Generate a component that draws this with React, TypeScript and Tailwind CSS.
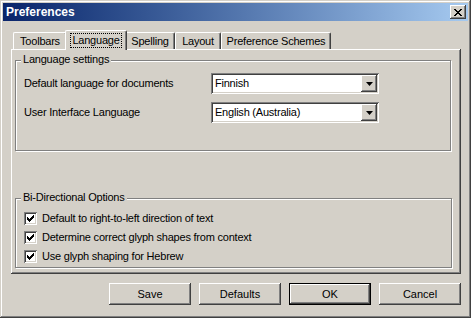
import type { ReactNode } from "react";

const raised =
  "bg-[#d4d0c8] shadow-[inset_-1px_-1px_#404040,inset_1px_1px_#ffffff,inset_-2px_-2px_#808080,inset_2px_2px_#d4d0c8]";
const sunken =
  "shadow-[inset_1px_1px_#808080,inset_-1px_-1px_#ffffff,inset_2px_2px_#404040,inset_-2px_-2px_#d4d0c8]";

function GroupBox({
  label,
  className,
  children,
}: {
  label: string;
  className: string;
  children: ReactNode;
}) {
  return (
    <div
      className={`relative border border-[#808080] shadow-[inset_1px_1px_#ffffff,1px_1px_#ffffff] ${className}`}
    >
      <span className="absolute -top-[8px] left-[5px] bg-[#d4d0c8] px-[2px] leading-[13px]">
        {label}
      </span>
      {children}
    </div>
  );
}

function Combo({ value }: { value: string }) {
  return (
    <div className={`flex h-[21px] w-[168px] items-stretch bg-white p-[2px] ${sunken}`}>
      <span className="flex-1 pl-[2px] leading-[17px]">{value}</span>
      <span className={`flex w-[16px] items-center justify-center ${raised}`}>
        <svg width="7" height="4" viewBox="0 0 7 4">
          <path d="M0 0h7L3.5 4z" fill="#000" />
        </svg>
      </span>
    </div>
  );
}

function Check({ label }: { label: string }) {
  return (
    <div className="flex h-[19px] items-center gap-[5px]">
      <span className={`flex h-[13px] w-[13px] items-center justify-center bg-white ${sunken}`}>
        <svg width="7" height="7" viewBox="0 0 7 7" shapeRendering="crispEdges">
          <path
            d="M0 2h1v1h1v1h1V3h1V2h1V1h1V0h1v3H6v1H5v1H4v1H3v1H2V6H1V5H0z"
            fill="#000"
          />
        </svg>
      </span>
      <span className="leading-[13px]">{label}</span>
    </div>
  );
}

function Tab({ label, width, active }: { label: string; width: string; active?: boolean }) {
  if (active) {
    return (
      <div
        className={`relative z-10 -mx-[2px] -mb-px flex h-[20px] items-start justify-center rounded-t-[2px] border-l border-t border-r border-white border-r-[#404040] bg-[#d4d0c8] pt-[2px] shadow-[inset_-1px_0_#808080] ${width}`}
      >
        <span className="border border-dotted border-black px-[1px] leading-[13px]">{label}</span>
      </div>
    );
  }
  return (
    <div
      className={`flex h-[17px] items-start justify-center rounded-t-[2px] border-l border-t border-r border-white border-r-[#404040] pt-[2px] shadow-[inset_-1px_0_#808080] ${width}`}
    >
      <span className="leading-[13px]">{label}</span>
    </div>
  );
}

function Button({ label, isDefault }: { label: string; isDefault?: boolean }) {
  if (isDefault) {
    return (
      <div className="h-[22px] w-[82px] border border-black">
        <div className={`flex h-full items-center justify-center ${raised}`}>{label}</div>
      </div>
    );
  }
  return (
    <div className={`flex h-[22px] w-[82px] items-center justify-center ${raised}`}>
      {label}
    </div>
  );
}

export default function App() {
  return (
    <div
      className="h-[318px] w-[471px] bg-[#d4d0c8] p-[3px] text-[11px] text-black shadow-[inset_-1px_-1px_#404040,inset_1px_1px_#d4d0c8,inset_-2px_-2px_#808080,inset_2px_2px_#ffffff]"
      style={{ fontFamily: '"Liberation Sans", Arial, sans-serif' }}
    >
      <div className="flex h-[18px] items-center justify-between bg-gradient-to-r from-[#0a246a] to-[#a6caf0] pl-[3px] pr-[2px]">
        <span className="text-[12px] font-bold leading-none text-white">Preferences</span>
        <span className={`flex h-[14px] w-[16px] items-center justify-center ${raised}`}>
          <svg width="8" height="7" viewBox="0 0 8 7" shapeRendering="crispEdges">
            <path
              d="M0 0h2v1h1v1h2V1h1V0h2v1H7v1H6v1H5v1h1v1h1v1h1v1H6V6H5V5H3v1H2v1H0V6h1V5h1V4h1V3H2V2H1V1H0z"
              fill="#000"
            />
          </svg>
        </span>
      </div>

      <div className="ml-[8px] mt-[10px] w-[450px] tracking-[-0.22px]">
        <div className="flex h-[18px] items-end pl-[2px]">
          <Tab label="Toolbars" width="w-[54px]" />
          <Tab label="Language" width="w-[62px]" active />
          <Tab label="Spelling" width="w-[50px]" />
          <Tab label="Layout" width="w-[46px]" />
          <Tab label="Preference Schemes" width="w-[110px]" />
        </div>

        <div className={`h-[225px] pl-[4px] pt-[11px] ${raised}`}>
          <GroupBox label="Language settings" className="h-[91px] w-[436px] pl-[8px] pt-[12px]">
            <div className="grid grid-cols-[187px_168px] items-center gap-y-[8px]">
              <span>Default language for documents</span>
              <Combo value="Finnish" />
              <span>User Interface Language</span>
              <Combo value="English (Australia)" />
            </div>
          </GroupBox>

          <GroupBox label="Bi-Directional Options" className="mt-[47px] h-[70px] w-[437px] pl-[8px] pt-[10px]">
            <Check label="Default to right-to-left direction of text" />
            <Check label="Determine correct glyph shapes from context" />
            <Check label="Use glyph shaping for Hebrew" />
          </GroupBox>
        </div>
      </div>

      <div className="mt-[9px] flex w-[458px] justify-end gap-[8px]">
        <Button label="Save" />
        <Button label="Defaults" />
        <Button label="OK" isDefault />
        <Button label="Cancel" />
      </div>
    </div>
  );
}
